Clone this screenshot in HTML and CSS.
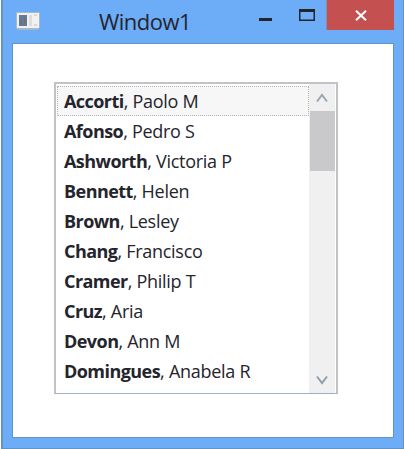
FILE: index.html
```
<!DOCTYPE html>
<html lang="en">
<head>
<meta charset="utf-8">
<title>Window1</title>
<link rel="stylesheet" href="styles.css">
</head>
<body>
<div class="window">
  <header class="titlebar">
    <svg class="app-icon" width="26" height="20" viewBox="0 0 26 20"><path d="M1 1h24v16l-3 2H3l-2-2z" fill="#a6b8ca"/><path d="M2 2h22v15H2z" fill="#f1f1f1"/><path d="M4 4h8v11H4z" fill="#5b7fa4"/><path d="M5 7h2v7H5zM9 6h2v7H9z" fill="#776f70"/><path d="M14 4h3v11h-3z" fill="#dddddf"/><path d="M19 4h3M19 14h3" stroke="#bfc3c7"/></svg>
    <h1 class="title">Window1</h1>
    <div class="controls">
      <svg class="minimize" width="13" height="3" viewBox="0 0 13 3"><path d="M0 0h13v3H0z" fill="#24252c"/></svg>
      <svg class="maximize" width="16" height="12" viewBox="0 0 16 12"><path d="M.75 1h14.5v10.25H.75z" fill="none" stroke="#24252c" stroke-width="1.5"/><path d="M0 0h16v3H0z" fill="#24252c"/></svg>
      <div class="close"><svg width="12" height="11" viewBox="0 0 12 11"><path d="M1 .7l10 9.6M11 .7L1 10.3" stroke="#fff" stroke-width="2"/></svg></div>
    </div>
  </header>
  <main class="client">
    <div class="listbox">
      <ul class="items">
        <li class="item focused"><b>Accorti</b><span>, Paolo M</span></li>
        <li class="item"><b>Afonso</b><span>, Pedro S</span></li>
        <li class="item"><b>Ashworth</b><span>, Victoria P</span></li>
        <li class="item"><b>Bennett</b><span>, Helen</span></li>
        <li class="item"><b>Brown</b><span>, Lesley</span></li>
        <li class="item"><b>Chang</b><span>, Francisco</span></li>
        <li class="item"><b>Cramer</b><span>, Philip T</span></li>
        <li class="item"><b>Cruz</b><span>, Aria</span></li>
        <li class="item"><b>Devon</b><span>, Ann M</span></li>
        <li class="item"><b>Domingues</b><span>, Anabela R</span></li>
      </ul>
      <div class="scrollbar">
        <div class="arrow"><svg width="12" height="10" viewBox="0 0 12 10"><path d="M1 8.5L6 2l5 6.5" fill="none" stroke="#9aa6b3" stroke-width="2"/></svg></div>
        <div class="thumb"></div>
        <div class="arrow down"><svg width="12" height="10" viewBox="0 0 12 10"><path d="M1 1.5L6 8l5-6.5" fill="none" stroke="#8d9fb2" stroke-width="2"/></svg></div>
      </div>
    </div>
  </main>
</div>
</body>
</html>
```
FILE: styles.css
```
* { box-sizing: border-box; }
body {
  margin: 0;
  width: 404px;
  height: 449px;
  padding-left: 1px;
  overflow: hidden;
  background: #fff;
  font-family: "Open Sans", "Noto Sans", sans-serif;
  color: #24252c;
}
.window {
  height: 449px;
  background: #6dacf6;
  border: solid #6593bf;
  border-width: 0 1px 1px 2px;
  padding: 0 9px 10px;
}
.titlebar {
  height: 43px;
  display: flex;
  align-items: flex-start;
}
.app-icon { margin: 11px 0 0 3px; }
.title {
  margin: 5px 0 0 58px;
  width: 92px;
  font-size: 22px;
  line-height: 32px;
  font-weight: 400;
  letter-spacing: -0.5px;
}
.controls {
  margin-left: auto;
  display: flex;
  align-items: flex-start;
}
.minimize { margin: 18px 27px 0 0; }
.maximize { margin: 9px 11px 0 0; }
.close {
  width: 68px;
  height: 30px;
  background: #c45050;
  border-left: 1px solid #858fa9;
  display: flex;
  justify-content: center;
  align-items: center;
}
.client {
  height: 395px;
  background: #fff;
  border: 1px solid #6593bf;
  padding: 38px 0 0 41px;
}
.listbox {
  width: 284px;
  height: 312px;
  border: 2px solid #c2c3c7;
  border-bottom: 1px solid #9fb0c4;
  display: flex;
  justify-content: space-between;
}
.items {
  margin: 2px 0 0 1px;
  padding: 0;
  width: 252px;
  list-style: none;
}
.item {
  height: 30px;
  padding-left: 6px;
  border: 1px solid transparent;
  font-size: 18px;
  line-height: 28px;
  white-space: nowrap;
  letter-spacing: -0.28px;
}
.item b { font-weight: 700; letter-spacing: -0.55px; }
.focused {
  border: 1px dotted #b4b4b8;
  background: #f7f7f7;
}
.scrollbar {
  width: 26px;
  margin-right: 1px;
  background: #f0f0f0;
  display: flex;
  flex-direction: column;
}
.arrow {
  height: 27px;
  display: flex;
  align-items: center;
  justify-content: center;
}
.down { margin-top: auto; }
.thumb {
  height: 60px;
  margin-left: 1px;
  background: #c9c9cb;
}
```
